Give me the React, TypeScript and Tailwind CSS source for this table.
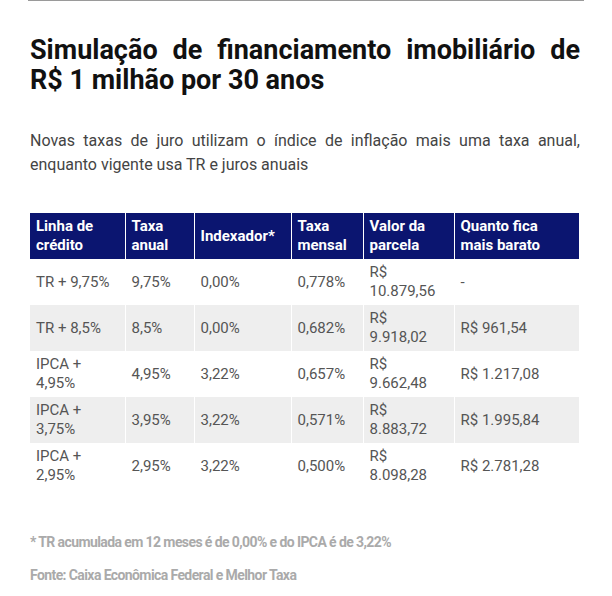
import React from 'react';

const headers = ['Linha de crédito', 'Taxa anual', 'Indexador*', 'Taxa mensal', 'Valor da parcela', 'Quanto fica mais barato'];

const rows = [
  ['TR + 9,75%', '9,75%', '0,00%', '0,778%', 'R$ 10.879,56', '-'],
  ['TR + 8,5%', '8,5%', '0,00%', '0,682%', 'R$ 9.918,02', 'R$ 961,54'],
  ['IPCA + 4,95%', '4,95%', '3,22%', '0,657%', 'R$ 9.662,48', 'R$ 1.217,08'],
  ['IPCA + 3,75%', '3,95%', '3,22%', '0,571%', 'R$ 8.883,72', 'R$ 1.995,84'],
  ['IPCA + 2,95%', '2,95%', '3,22%', '0,500%', 'R$ 8.098,28', 'R$ 2.781,28'],
];

const widths = ['w-[95px]', 'w-[69px]', 'w-[97px]', 'w-[72px]', 'w-[91px]', 'w-[125px]'];

export default function App() {
  return (
    <div className="w-[612px] h-[596px] bg-white font-['Roboto',sans-serif] overflow-hidden">
      <div className="mx-[28px] border-t border-[#9a9a9a]" />
      <div className="pl-[30px] pr-[32px]">
        <h1 className="mt-[34px] text-[27px] leading-[30px] font-bold text-[#111] text-justify">
          Simulação de financiamento imobiliário de R$ 1 milhão por 30 anos
        </h1>
        <p className="mt-[34px] text-[16px] leading-[24px] text-[#444] text-justify">
          Novas taxas de juro utilizam o índice de inflação mais uma taxa anual, enquanto vigente usa TR e juros anuais
        </p>
        <table className="mt-[36px] w-[549px] table-fixed border-collapse text-[15px] leading-[19px]">
          <thead>
            <tr className="bg-[#0b1570] text-white h-[46px]">
              {headers.map((h, i) => (
                <th key={i} className={`${widths[i]} text-left font-bold align-middle px-[6px] border-x border-white first:border-l-0 last:border-r-0`}>
                  {h}
                </th>
              ))}
            </tr>
          </thead>
          <tbody>
            {rows.map((r, ri) => (
              <tr key={ri} className={`h-[46px] ${ri % 2 === 1 ? 'bg-[#eeeeee]' : 'bg-white'}`}>
                {r.map((c, ci) => (
                  <td key={ci} className={`${widths[ci]} text-left align-middle px-[6px] text-[#555] border-x border-white first:border-l-0 last:border-r-0`}>
                    {c}
                  </td>
                ))}
              </tr>
            ))}
          </tbody>
        </table>
        <p className="mt-[43px] text-[14px] font-bold tracking-[-0.6px] text-[#aaaaaa]">
          * TR acumulada em 12 meses é de 0,00% e do IPCA é de 3,22%
        </p>
        <p className="mt-[12px] text-[14px] font-bold tracking-[-0.6px] text-[#aaaaaa]">
          Fonte: Caixa Econômica Federal e Melhor Taxa
        </p>
      </div>
    </div>
  );
}
